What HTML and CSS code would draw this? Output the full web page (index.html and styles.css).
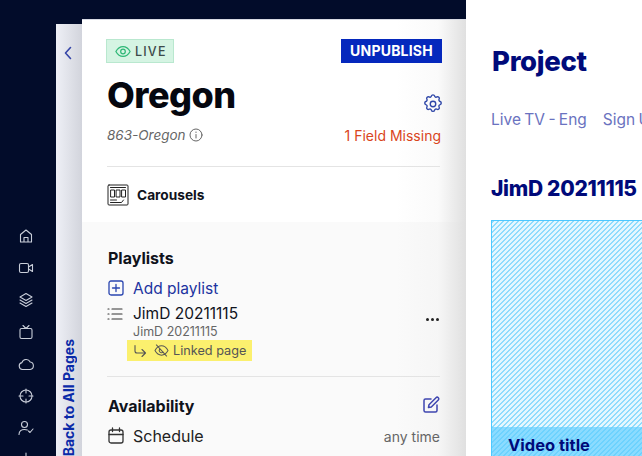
FILE: index.html
```html
<!DOCTYPE html>
<html lang="en">
<head>
<meta charset="utf-8">
<title>Oregon</title>
<link rel="stylesheet" href="styles.css">
</head>
<body>
<div class="app">
  <nav class="nav">
    <svg class="nav-icon" viewBox="0 0 16 16"><path d="M2.500 6.500 8 2l5.500 4.500V14h-11zM6 14V9.500h4V14"/></svg>
    <svg class="nav-icon" viewBox="0 0 16 16"><rect x="1.500" y="3.500" width="9" height="9" rx="1.500"/><path d="m10.500 7 4-2.500v7l-4-2.500"/></svg>
    <svg class="nav-icon" viewBox="0 0 16 16"><path d="M8 1.500 14 5 8 8.500 2 5zM2 8l6 3.500L14 8M2 11l6 3.500 6-3.500"/></svg>
    <svg class="nav-icon" viewBox="0 0 16 16"><rect x="2" y="4.500" width="12" height="10" rx="1.500"/><path d="M5 1.500 8 4.500l3-3"/></svg>
    <svg class="nav-icon" viewBox="0 0 16 16"><path d="M4.500 13.500a3.500 3.500 0 0 1-.6-6.900A4.500 4.500 0 0 1 12.200 6a3.800 3.800 0 0 1 0 7.500z"/></svg>
    <svg class="nav-icon" viewBox="0 0 16 16"><circle cx="8" cy="8" r="6"/><path d="M8 1v4M8 11v4M1 8h4M11 8h4"/></svg>
    <svg class="nav-icon" viewBox="0 0 16 16"><circle cx="6.500" cy="4.500" r="3"/><path d="M1 14.500c0-3.500 2.500-5 5.500-5 1 0 2 .2 2.800.6M10.500 11l1.500 1.500L15 9"/></svg>
    <svg class="nav-icon" viewBox="0 0 16 16"><circle cx="8" cy="8" r="2.500"/><path d="M8 1v3M8 12v3M1 8h3M12 8h3"/></svg>
  </nav>

  <aside class="back">
    <svg class="back-chevron" viewBox="0 0 8 14"><path d="M6.500 1.500 1.500 7l5 5.500"/></svg>
    <span class="back-label">Back to All Pages</span>
  </aside>

  <section class="panel">
    <div class="panel-top">
      <div class="status-row">
        <span class="live">
          <svg class="live-eye" viewBox="0 0 18 14"><path d="M1 7c2-3.600 4.800-5.500 8-5.500S15 3.400 17 7c-2 3.600-4.800 5.500-8 5.500S3 10.600 1 7z"/><circle cx="9" cy="7" r="2.600"/></svg>
          LIVE
        </span>
        <button class="unpublish">UNPUBLISH</button>
      </div>
      <div class="title-row">
        <h1 class="title">Oregon</h1>
        <svg class="gear" viewBox="0 0 24 24"><path d="M10.300 3.200c.4-1.600 3-1.600 3.400 0a1.700 1.700 0 0 0 2.600 1.100c1.400-.9 3.300 1 2.400 2.400a1.700 1.700 0 0 0 1.100 2.600c1.600.4 1.600 3 0 3.400a1.700 1.700 0 0 0-1.100 2.600c.9 1.400-1 3.300-2.400 2.400a1.700 1.700 0 0 0-2.600 1.100c-.4 1.600-3 1.600-3.400 0a1.700 1.700 0 0 0-2.600-1.100c-1.400.9-3.300-1-2.400-2.400a1.700 1.700 0 0 0-1.100-2.600c-1.600-.4-1.600-3 0-3.400a1.700 1.700 0 0 0 1.100-2.600c-.9-1.400 1-3.300 2.400-2.400a1.700 1.700 0 0 0 2.600-1.100z"/><circle cx="12" cy="12" r="3"/></svg>
      </div>
      <div class="meta-row">
        <span class="slug">863-Oregon
          <svg class="info" viewBox="0 0 14 14"><circle cx="7" cy="7" r="6"/><path d="M7 6.500V10M7 4v.500"/></svg>
        </span>
        <span class="missing">1 Field Missing</span>
      </div>
      <div class="type-row">
        <svg class="carousel-icon" viewBox="0 0 22 22"><rect x="1" y="1" width="20" height="20" rx="1"/><path d="M3.500 3.500h15M4 6h3.500v7H4zM9.500 6h3.500v7H9.500zM15 6h3.500v7H15zM3.500 16h6M3.500 18.500h11l2-2.500"/></svg>
        <span>Carousels</span>
      </div>
    </div>

    <div class="panel-body">
      <h2 class="section-title">Playlists</h2>
      <a class="add-row">
        <svg class="row-icon add-icon" viewBox="0 0 18 18"><rect x="2" y="2" width="14" height="14" rx="2"/><path d="M9 5.500v7M5.500 9h7"/></svg>
        Add playlist
      </a>
      <div class="playlist">
        <svg class="list-icon" viewBox="0 0 16 14"><path d="M5 2h10M5 7h10M5 12h10M1 2h1M1 7h1M1 12h1"/></svg>
        <div class="playlist-text">
          <div class="playlist-name">JimD 20211115</div>
          <div class="playlist-sub">JimD 20211115</div>
        </div>
        <div class="dots"><i></i><i></i><i></i></div>
      </div>
      <div class="linked">
        <svg class="linked-arrow" viewBox="0 0 14 14"><path d="M2 1.500V7a2 2 0 0 0 2 2h8M9 5.500 12.500 9 9 12.500"/></svg>
        <svg class="linked-eye" viewBox="0 0 16 14"><path d="M1 7c1.800-3.200 4.200-5 7-5s5.200 1.800 7 5c-1.800 3.200-4.200 5-7 5S2.800 10.200 1 7zM2.500 1l11 12"/><path d="M6 5.500a2.500 2.500 0 0 0 3.700 3.300"/></svg>
        <span>Linked page</span>
      </div>
      <div class="section-head">
        <h2 class="section-title">Availability</h2>
        <svg class="edit" viewBox="0 0 18 18"><path d="M9 3H3.500A1.500 1.500 0 0 0 2 4.500v10A1.500 1.500 0 0 0 3.500 16h10a1.500 1.500 0 0 0 1.500-1.500V9"/><path d="M6.500 11.500 7 8.700 14 1.700a1.400 1.400 0 0 1 2.300 2.300l-7 7z"/></svg>
      </div>
      <div class="schedule">
        <svg class="row-icon cal" viewBox="0 0 18 18"><rect x="2" y="3" width="14" height="13" rx="2"/><path d="M2 7.500h14M5.500 1v3.500M12.500 1v3.500"/></svg>
        <span class="schedule-name">Schedule</span>
        <span class="schedule-value">any time</span>
      </div>
    </div>
  </section>

  <main class="preview">
    <h1 class="project">Project</h1>
    <div class="tabs"><span>Live TV - Eng</span><span>Sign Up</span></div>
    <h2 class="video-head">JimD 20211115</h2>
    <div class="hatch">
      <div class="video-band">Video title</div>
    </div>
  </main>
</div>
</body>
</html>
```

FILE: styles.css
```css
* { box-sizing: border-box; }
html, body { margin: 0; height: 100%; overflow: hidden; }
body { font-family: Inter, "Liberation Sans", sans-serif; background: #020c2a; }
svg { fill: none; stroke: currentColor; stroke-linecap: round; stroke-linejoin: round; flex: none; }
h1, h2 { margin: 0; }

.app { display: flex; height: 456px; width: 642px; overflow: hidden; }

.nav { width: 56px; flex: none; display: flex; flex-direction: column; align-items: center; padding: 228px 4px 0 0; gap: 16px; color: #c9ced9; }
.nav-icon { width: 16px; height: 16px; stroke-width: 1.1; }

.back { width: 26px; flex: none; margin-top: 24px; display: flex; flex-direction: column; justify-content: space-between; align-items: center; background: linear-gradient(90deg, #eef0f6, #d2d4dc); padding: 22px 0 0 0; color: #3545a8; }
.back-chevron { width: 8px; height: 14px; stroke-width: 1.6; margin-right: 2px; }
.back-label { writing-mode: vertical-rl; transform: rotate(180deg); font-size: 14px; font-weight: 700; color: #0a2aa8; line-height: 17px; margin-right: 2px; white-space: nowrap; }

.panel { width: 384px; flex: none; margin-top: 19px; background: #fff; position: relative; border-top: 1px solid #d8dbe4; }
.panel::after { content: ""; position: absolute; top: 0; right: 0; bottom: 0; width: 70px; background: linear-gradient(90deg, rgba(224,224,224,0), rgba(224,224,224,.15) 60%, #e0e0e0); pointer-events: none; }
.panel-top { height: 202px; padding: 19px 25px 0 24px; display: flex; flex-direction: column; }

.status-row { display: flex; justify-content: space-between; align-items: flex-start; }
.live { display: flex; align-items: center; gap: 4px; width: 68px; height: 24px; background: #d5f4e3; border: 1px solid #b9e8cf; padding-left: 8px; font-size: 12.500px; font-weight: 500; letter-spacing: 1.200px; color: #3c4a4a; }
.live-eye { width: 16px; height: 13px; color: #2fb877; stroke-width: 1.400; }
.unpublish { position: relative; z-index: 1; width: 101px; height: 24px; margin-right: -1px; padding: 0; border: 0; background: #0528bd; color: #fff; font: 700 14px/24px Inter, "Liberation Sans", sans-serif; letter-spacing: .2px; }

.title-row { display: flex; justify-content: space-between; align-items: flex-end; height: 44px; margin-top: 10px; }
.title { font-size: 36px; font-weight: 800; line-height: 44px; letter-spacing: -.5px; color: #05070f; margin-left: 1px; }
.gear { width: 22px; height: 22px; color: #2f47a8; stroke-width: 1.500; margin: 0 -3px 2px 0; position: relative; z-index: 1; }

.meta-row { display: flex; justify-content: space-between; align-items: center; margin-top: 7px; height: 22px; font-size: 14px; }
.slug { display: flex; align-items: center; gap: 3px; font-size: 13.500px; font-style: italic; color: #666; margin-left: 1px; }
.info { width: 14px; height: 14px; color: #666; stroke-width: 1; }
.missing { color: #d9451c; position: relative; z-index: 1; }

.type-row { display: flex; align-items: center; gap: 8px; margin: 20px 1px 0 1px; padding-top: 17px; border-top: 1px solid #e4e4e4; font-size: 13.700px; font-weight: 700; color: #10131c; }
.carousel-icon { width: 22px; height: 22px; color: #222; stroke-width: 1; }

.panel-body { height: 240px; background: #fafafa; padding: 26px 26px 0 25px; display: flex; flex-direction: column; }
.section-title { font-size: 16px; font-weight: 700; line-height: 20px; color: #10131c; margin-left: 1px; }
.add-row { display: flex; align-items: center; gap: 8px; margin-top: 10px; height: 20px; font-size: 15.500px; color: #1c33a0; }
.row-icon { width: 18px; height: 18px; stroke-width: 1.300; }
.add-icon { color: #2a45b0; }
.playlist { display: flex; align-items: flex-start; margin-top: 6px; }
.list-icon { width: 16px; height: 14px; margin-top: 3px; color: #333; stroke-width: 1.200; }
.playlist-text { margin-left: 10px; flex: 1; }
.playlist-name { font-size: 15.500px; line-height: 20px; color: #10131c; }
.playlist-sub { font-size: 12.500px; line-height: 15px; color: #666; }
.dots { display: flex; gap: 2px; margin-top: 14px; margin-right: 1px; position: relative; z-index: 1; }
.dots i { width: 3px; height: 3px; border-radius: 50%; background: #222; }
.linked { display: flex; align-items: center; width: 125px; height: 21px; margin: 1px 0 0 20px; padding-left: 6px; background: #fbf06e; font-size: 12.700px; color: #555; white-space: nowrap; }
.linked-arrow { width: 14px; height: 14px; stroke-width: 1.100; margin-right: 7px; color: #555; }
.linked-eye { width: 15px; height: 13px; stroke-width: 1.100; margin-right: 4px; color: #555; }
.section-head { display: flex; justify-content: space-between; align-items: center; margin-top: 15px; padding-top: 19px; border-top: 1px solid #e4e4e4; }
.edit { width: 18px; height: 18px; color: #3f46b0; stroke-width: 1.500; margin-top: -2px; position: relative; z-index: 1; }
.schedule { display: flex; align-items: center; margin-top: 10px; height: 20px; }
.cal { color: #333; }
.schedule-name { margin-left: 8px; flex: 1; font-size: 16px; color: #222; }
.schedule-value { font-size: 14px; color: #666; position: relative; z-index: 1; }

.preview { flex: 1; min-width: 0; background: #fff; padding: 45px 0 0 25px; color: #000a7a; overflow: hidden; position: relative; }
.project { font-size: 27.500px; font-weight: 800; line-height: 32px; margin-left: 1px; letter-spacing: -.3px; }
.tabs { display: flex; gap: 16px; margin-top: 32px; height: 22px; font-size: 15.500px; line-height: 22px; word-spacing: -1px; color: #6a72c0; white-space: nowrap; }
.video-head { font-size: 21px; font-weight: 800; line-height: 26px; margin-top: 45px; white-space: nowrap; letter-spacing: -.3px; }
.hatch { width: 200px; height: 240px; margin-top: 18px; padding-top: 206px; border: 1px solid #4cc8ff; background: repeating-linear-gradient(135deg, #8fdcfd 0 1.768px, #e4f7ff 1.768px 3.536px); }
.video-band { height: 40px; padding: 6px 0 0 16px; background: rgba(90,205,255,.65); font-size: 16.500px; font-weight: 700; line-height: 24px; }
```
